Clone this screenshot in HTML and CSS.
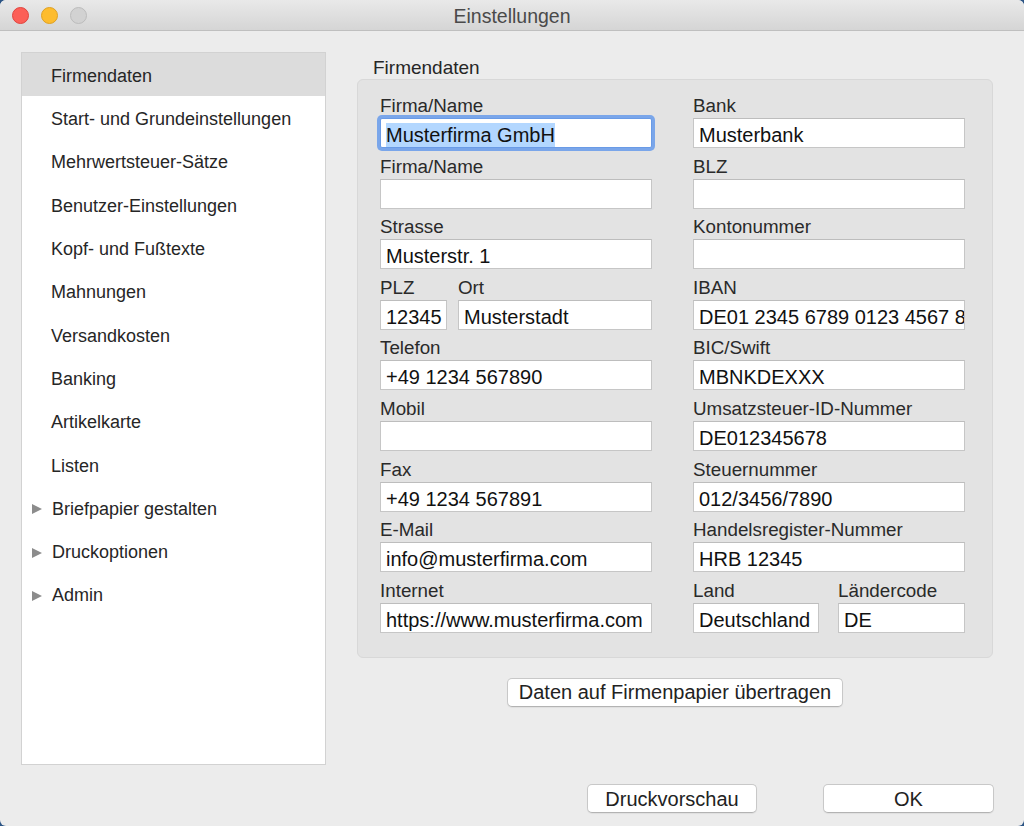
FILE: index.html
```html
<!DOCTYPE html>
<html lang="de">
<head>
<meta charset="utf-8">
<title>Einstellungen</title>
<link rel="stylesheet" href="styles.css">
</head>
<body>
<div class="window">
  <div class="titlebar">
    <div class="lights">
      <span class="light red"></span>
      <span class="light yellow"></span>
      <span class="light gray"></span>
    </div>
    <div class="title">Einstellungen</div>
    <div></div>
  </div>
  <div class="content">
    <ul class="sidebar">
      <li class="item selected">Firmendaten</li>
      <li class="item">Start- und Grundeinstellungen</li>
      <li class="item">Mehrwertsteuer-Sätze</li>
      <li class="item">Benutzer-Einstellungen</li>
      <li class="item">Kopf- und Fußtexte</li>
      <li class="item">Mahnungen</li>
      <li class="item">Versandkosten</li>
      <li class="item">Banking</li>
      <li class="item">Artikelkarte</li>
      <li class="item">Listen</li>
      <li class="item parent"><span class="arrow"></span>Briefpapier gestalten</li>
      <li class="item parent"><span class="arrow"></span>Druckoptionen</li>
      <li class="item parent"><span class="arrow"></span>Admin</li>
    </ul>
    <div class="main">
      <div class="group-title">Firmendaten</div>
      <div class="group">
        <div class="col">
          <div class="fg"><div class="label">Firma/Name</div><div class="field focused"><span class="sel">Musterfirma GmbH</span></div></div>
          <div class="fg"><div class="label">Firma/Name</div><div class="field"></div></div>
          <div class="fg"><div class="label">Strasse</div><div class="field">Musterstr. 1</div></div>
          <div class="fg split plz">
            <div class="sub"><div class="label">PLZ</div><div class="field">12345</div></div>
            <div class="sub"><div class="label">Ort</div><div class="field">Musterstadt</div></div>
          </div>
          <div class="fg"><div class="label">Telefon</div><div class="field">+49 1234 567890</div></div>
          <div class="fg"><div class="label">Mobil</div><div class="field"></div></div>
          <div class="fg"><div class="label">Fax</div><div class="field">+49 1234 567891</div></div>
          <div class="fg"><div class="label">E-Mail</div><div class="field">info@musterfirma.com</div></div>
          <div class="fg"><div class="label">Internet</div><div class="field">https://www.musterfirma.com</div></div>
        </div>
        <div class="col">
          <div class="fg"><div class="label">Bank</div><div class="field">Musterbank</div></div>
          <div class="fg"><div class="label">BLZ</div><div class="field"></div></div>
          <div class="fg"><div class="label">Kontonummer</div><div class="field"></div></div>
          <div class="fg"><div class="label">IBAN</div><div class="field">DE01 2345 6789 0123 4567 89</div></div>
          <div class="fg"><div class="label">BIC/Swift</div><div class="field">MBNKDEXXX</div></div>
          <div class="fg"><div class="label">Umsatzsteuer-ID-Nummer</div><div class="field">DE012345678</div></div>
          <div class="fg"><div class="label">Steuernummer</div><div class="field">012/3456/7890</div></div>
          <div class="fg"><div class="label">Handelsregister-Nummer</div><div class="field">HRB 12345</div></div>
          <div class="fg split land">
            <div class="sub"><div class="label">Land</div><div class="field">Deutschland</div></div>
            <div class="sub"><div class="label">Ländercode</div><div class="field">DE</div></div>
          </div>
        </div>
      </div>
      <div class="center-row"><button class="btn wide">Daten auf Firmenpapier übertragen</button></div>
    </div>
  </div>
  <div class="footer">
    <button class="btn preview">Druckvorschau</button>
    <button class="btn ok">OK</button>
  </div>
</div>
</body>
</html>
```
FILE: styles.css
```css
* { box-sizing: border-box; }
html, body { margin: 0; padding: 0; }
body {
  background: #2c5585;
  font-family: "Liberation Sans", Arial, Helvetica, sans-serif;
  color: #222;
}
.window {
  width: 1024px;
  height: 826px;
  background: #ececec;
  border-radius: 6px;
  overflow: hidden;
}
.titlebar {
  height: 31px;
  display: grid;
  grid-template-columns: 1fr auto 1fr;
  align-items: center;
  background: linear-gradient(#e9e9e9, #d5d5d5);
  border-bottom: 1px solid #bfbfbf;
}
.lights {
  display: flex;
  gap: 12px;
  padding-left: 12px;
}
.light {
  width: 17px;
  height: 17px;
  border-radius: 50%;
  display: block;
}
.red { background: #fc5f57; border: 1px solid #e0443e; }
.yellow { background: #fdbc2e; border: 1px solid #dea123; }
.gray { background: #d2d2d2; border: 1px solid #bcbcbc; }
.title {
  font-size: 19.5px;
  color: #4a4a4a;
  line-height: 22px;
  padding-top: 2px;
}
.content {
  display: flex;
  padding: 21px 0 0 21px;
}
.sidebar {
  list-style: none;
  margin: 0;
  padding: 0;
  width: 305px;
  height: 713px;
  background: #fff;
  border: 1px solid #d2d2d2;
  font-size: 18px;
}
.item {
  height: 43.3px;
  display: flex;
  align-items: center;
  padding-left: 29px;
  padding-top: 4px;
  color: #262626;
}
.item.selected {
  background: #dcdcdc;
  height: 43px;
}
.item.parent { padding-left: 10px; }
.arrow {
  width: 0;
  height: 0;
  border-top: 5.5px solid transparent;
  border-bottom: 5.5px solid transparent;
  border-left: 10px solid #8c8c8c;
  margin-right: 10px;
}
.main {
  margin-left: 31px;
  width: 636px;
  padding-top: 5px;
}
.group-title {
  font-size: 19px;
  line-height: 22px;
  padding-left: 16px;
  color: #262626;
}
.group {
  background: #e3e3e3;
  border: 1px solid #d8d8d8;
  border-radius: 6px;
  padding: 14px 27px 24px 22px;
  display: grid;
  grid-template-columns: 272px 272px;
  column-gap: 41px;
}
.col {
  display: flex;
  flex-direction: column;
  gap: 6.6px;
}
.fg { display: flex; flex-direction: column; }
.fg.split { flex-direction: row; }
.plz { gap: 11px; }
.plz .sub:first-child { width: 67px; }
.plz .sub:last-child { flex: 1; }
.land { gap: 19px; }
.land .sub:first-child { width: 126px; }
.land .sub:last-child { flex: 1; }
.sub { display: flex; flex-direction: column; }
.label {
  font-size: 18.8px;
  line-height: 22px;
  padding-top: 1px;
  height: 24px;
  color: #2a2a2a;
  white-space: nowrap;
}
.field {
  height: 30px;
  background: #fff;
  border: 1px solid #c6c6c6;
  border-top-color: #bdbdbd;
  font-size: 20px;
  line-height: 24px;
  padding: 4px 0 0 5px;
  color: #111;
  white-space: nowrap;
  overflow: hidden;
}
.field.focused {
  border-color: #6a9be6;
  box-shadow: 0 0 0 3px rgba(103, 155, 235, 0.85);
  border-radius: 2px;
  overflow: visible;
}
.sel { background: #b3d7ff; padding: 1px 0 1px; }
.center-row {
  display: flex;
  justify-content: center;
  margin-top: 20px;
}
.btn {
  font-family: "Liberation Sans", Arial, Helvetica, sans-serif;
  font-size: 20px;
  height: 29px;
  line-height: 26px;
  padding: 0;
  background: #fff;
  color: #222;
  border: 1px solid #c8c8c8;
  border-bottom-color: #b3b3b3;
  border-radius: 5px;
  box-shadow: 0 1px 1px rgba(0, 0, 0, 0.06);
}
.btn.wide { width: 336px; }
.footer {
  display: flex;
  justify-content: flex-end;
  gap: 66px;
  padding-right: 30px;
  margin-top: 19px;
}
.btn.preview { width: 170px; }
.btn.ok { width: 171px; }
```
